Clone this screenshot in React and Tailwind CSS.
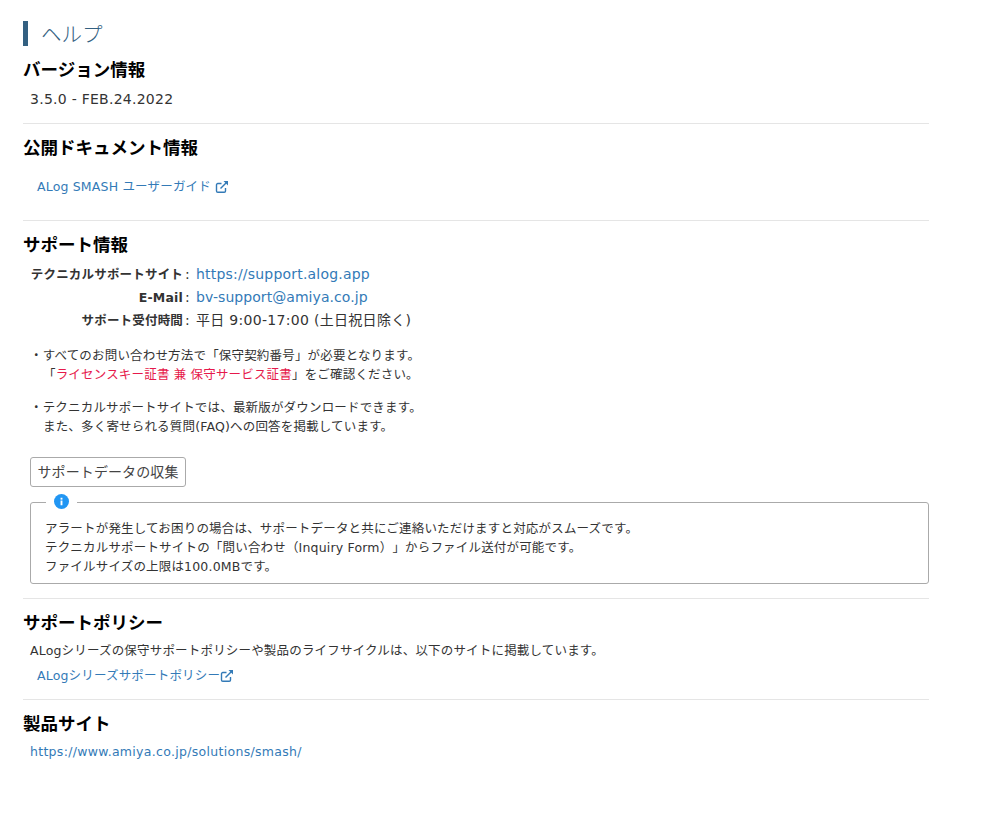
import React from 'react';

const ExternalIcon = ({ className }) => (
    <svg viewBox="0 0 14 14" className={className} fill="none" stroke="currentColor" strokeWidth="1.4">
        <path d="M10.5 8v3a1.3 1.3 0 0 1-1.3 1.3H2.8A1.3 1.3 0 0 1 1.5 11V4.8a1.3 1.3 0 0 1 1.3-1.3h3.7" />
        <path d="M5.5 8.5 12 2" />
        <path d="M8.5 1h4.5v4.5z" fill="currentColor" stroke="none" />
    </svg>
);

const SectionTitle = ({ children }) => (
    <h2 className="text-[17.5px] leading-[25px] font-bold text-black tracking-normal">{children}</h2>
);

const Divider = ({ className }) => <hr className={`border-t border-[#e5e5e5] ${className}`} />;

const supportRows = [
    { label: 'テクニカルサポートサイト', value: 'https://support.alog.app', valueClass: 'text-[#337ab7] tracking-[0.2px]' },
    { label: 'E-Mail', value: 'bv-support@amiya.co.jp', valueClass: 'text-[#337ab7] tracking-[0.06px]' },
    { label: 'サポート受付時間', value: '平日 9:00-17:00 (土日祝日除く)', valueClass: 'tracking-[0.3px]' },
];

export default function App() {
    return (
        <div className="min-h-[823px] bg-white pl-[23px] pt-[21px] text-[#333] text-[12.5px] leading-[19px] tracking-[0.18px] [text-spacing-trim:space-all] font-['DejaVu_Sans','Noto_Sans_CJK_JP',sans-serif]">
            <div className="w-[906px]">
                <h1 className="border-l-[5px] border-[#336081] pl-[13px] h-[25px] text-[20.5px] leading-[28px] font-light text-[#336081] tracking-normal">ヘルプ</h1>

                <div className="mt-[12px]"><SectionTitle>バージョン情報</SectionTitle></div>
                <p className="mt-[6px] ml-[7px] text-[14px] leading-[20px] tracking-[0.26px]">3.5.0 - FEB.24.2022</p>
                <Divider className="mt-[14px]" />

                <div className="mt-[12px]"><SectionTitle>公開ドキュメント情報</SectionTitle></div>
                <a className="mt-[16px] ml-[14px] flex items-center gap-[4px] text-[#337ab7] leading-[20px]">
                    ALog SMASH ユーザーガイド
                    <ExternalIcon className="w-[14px] h-[14px]" />
                </a>
                <Divider className="mt-[23px]" />

                <div className="mt-[12px]"><SectionTitle>サポート情報</SectionTitle></div>
                <div className="mt-[5px] flex flex-col">
                    {supportRows.map((row) => (
                        <div key={row.label} className="flex items-center h-[23px]">
                            <span className="w-[153px] ml-[7px] text-right font-bold">{row.label}</span>
                            <span className="w-[13px] pl-[2px] text-[14px]">:</span>
                            <span className={`text-[14px] ${row.valueClass}`}>{row.value}</span>
                        </div>
                    ))}
                </div>

                <p className="mt-[14px] ml-[7px]">
                    ・すべてのお問い合わせ方法で「保守契約番号」が必要となります。<br />
                    <span className="ml-[13px]">「<span className="text-[#e6194b]">ライセンスキー証書 兼 保守サービス証書</span>」をご確認ください。</span>
                </p>
                <p className="mt-[14px] ml-[7px]">
                    ・テクニカルサポートサイトでは、最新版がダウンロードできます。<br />
                    <span className="ml-[13px]">また、多く寄せられる質問(FAQ)への回答を掲載しています。</span>
                </p>

                <button className="mt-[21px] ml-[7px] block h-[30px] w-[156px] border border-[#aaa] rounded-[3px] text-[14px] tracking-[0.1px] text-[#444] bg-white">サポートデータの収集</button>

                <fieldset className="mt-[7px] ml-[7px] border border-[#aaa] rounded-[3px] px-[14px] pt-[9px] pb-[7px]">
                    <legend className="ml-[1px] px-[8px] h-[16px]">
                        <svg viewBox="0 0 16 16" className="w-[15px] h-[15px]">
                            <circle cx="8" cy="8" r="8" fill="#2196f3" />
                            <rect x="7" y="7" width="2" height="5" fill="#fff" />
                            <rect x="7" y="4" width="2" height="2" fill="#fff" />
                        </svg>
                    </legend>
                    <p>アラートが発生してお困りの場合は、サポートデータと共にご連絡いただけますと対応がスムーズです。</p>
                    <p>テクニカルサポートサイトの「問い合わせ（Inquiry Form）」からファイル送付が可能です。</p>
                    <p>ファイルサイズの上限は100.0MBです。</p>
                </fieldset>
                <Divider className="mt-[14px]" />

                <div className="mt-[12px]"><SectionTitle>サポートポリシー</SectionTitle></div>
                <p className="mt-[5px] ml-[7px]">ALogシリーズの保守サポートポリシーや製品のライフサイクルは、以下のサイトに掲載しています。</p>
                <a className="mt-[6px] ml-[14px] flex items-center text-[#337ab7] leading-[20px]">
                    ALogシリーズサポートポリシー
                    <ExternalIcon className="w-[14px] h-[14px]" />
                </a>
                <Divider className="mt-[13px]" />

                <div className="mt-[12px]"><SectionTitle>製品サイト</SectionTitle></div>
                <a className="mt-[5px] ml-[7px] block text-[#337ab7] leading-[20px] tracking-[0.3px]">https://www.amiya.co.jp/solutions/smash/</a>
            </div>
        </div>
    );
}
